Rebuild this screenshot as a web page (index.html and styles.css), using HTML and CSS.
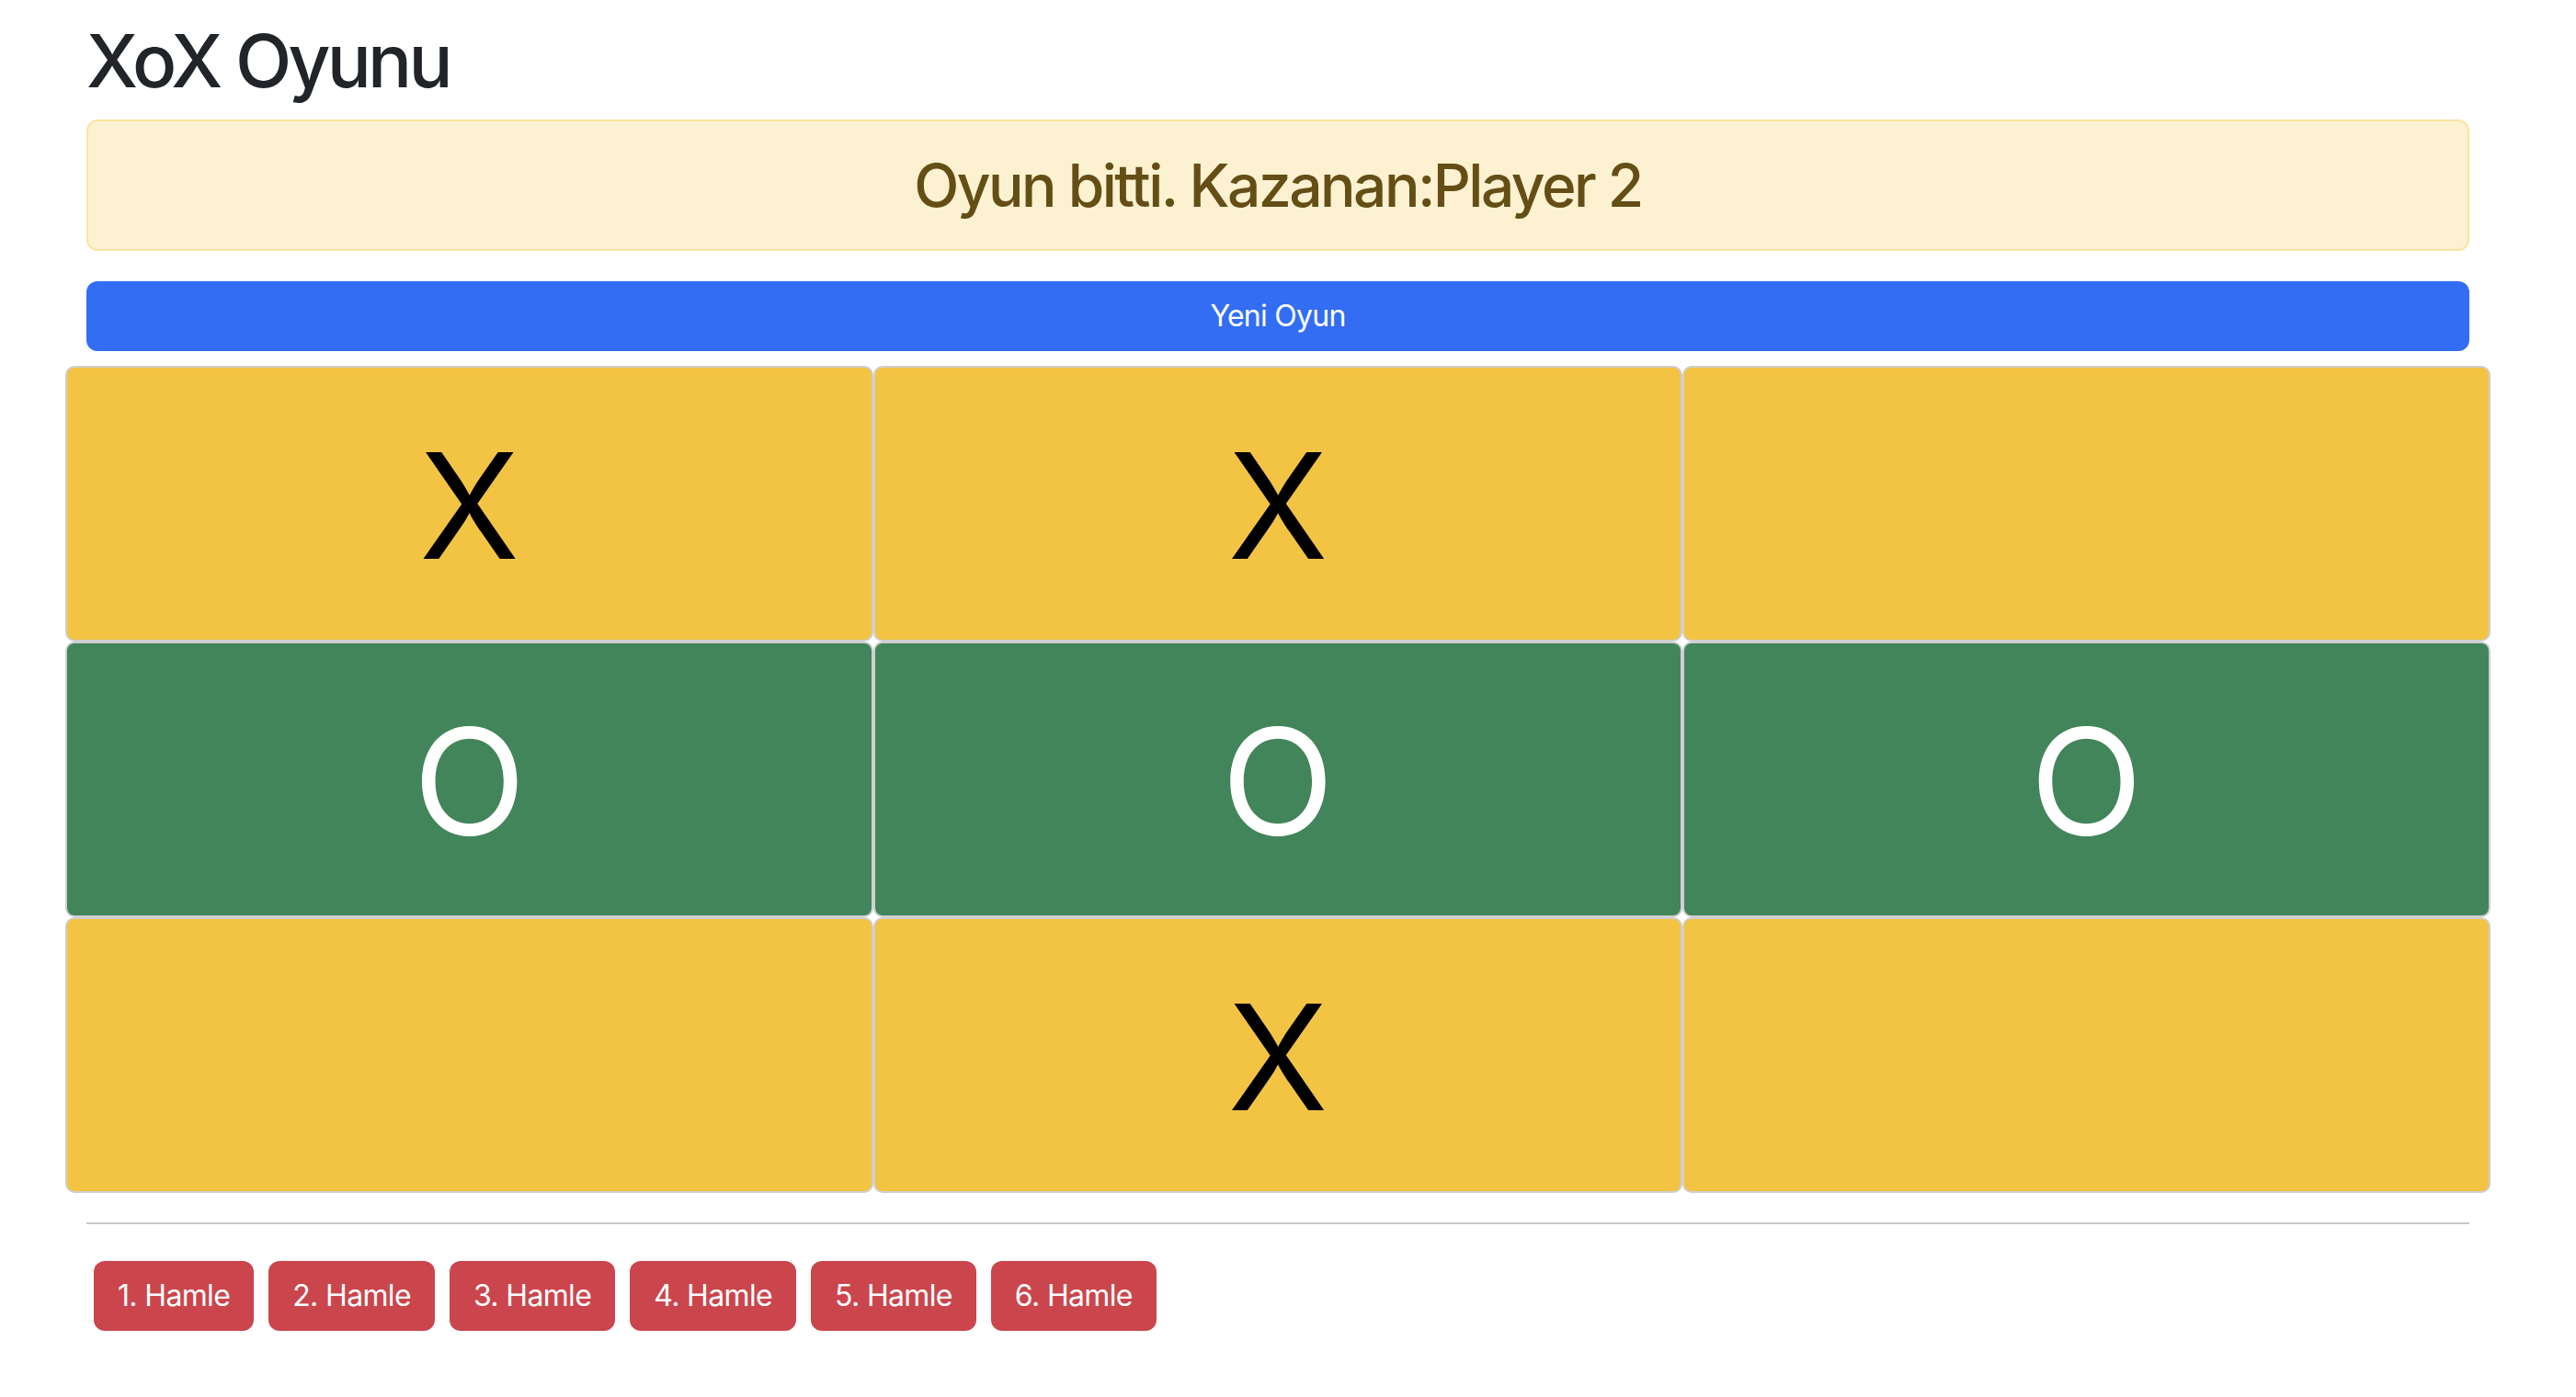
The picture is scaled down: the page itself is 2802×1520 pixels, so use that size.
FILE: index.html
```html
<!DOCTYPE html>
<html lang="tr">
<head>
<meta charset="utf-8">
<title>XoX Oyunu</title>
<link rel="stylesheet" href="styles.css">
</head>
<body>
<div class="page">
  <div class="container">
    <h1 class="title">XoX Oyunu</h1>
    <div class="alert"><h2 class="alert-text">Oyun bitti. Kazanan:Player 2</h2></div>
    <button class="btn btn-primary btn-block">Yeni Oyun</button>
    <div class="board">
      <button class="cell cell-x">X</button>
      <button class="cell cell-x">X</button>
      <button class="cell cell-x"></button>
      <button class="cell cell-o">O</button>
      <button class="cell cell-o">O</button>
      <button class="cell cell-o">O</button>
      <button class="cell cell-x"></button>
      <button class="cell cell-x">X</button>
      <button class="cell cell-x"></button>
    </div>
    <hr class="divider">
    <div class="moves">
      <button class="btn btn-danger">1. Hamle</button>
      <button class="btn btn-danger">2. Hamle</button>
      <button class="btn btn-danger">3. Hamle</button>
      <button class="btn btn-danger">4. Hamle</button>
      <button class="btn btn-danger">5. Hamle</button>
      <button class="btn btn-danger">6. Hamle</button>
    </div>
  </div>
</div>
</body>
</html>
```
FILE: styles.css
```css
* { box-sizing: border-box; }
html, body { margin: 0; padding: 0; background: #fff; }
body {
  font-family: Inter, "Noto Sans", "Liberation Sans", sans-serif;
  color: #212529;
}
.page { padding: 18px 0 40px 94px; }
.container { width: 2592px; }
.title {
  margin: 0 0 16px;
  font-size: 80px;
  line-height: 96px;
  font-weight: 500;
  letter-spacing: -3.8px;
  color: #212529;
}
.alert {
  height: 143px;
  margin-bottom: 33px;
  border: 2px solid #fbe4a2;
  border-radius: 12px;
  background: #fcf2d1;
  display: flex;
  align-items: center;
  justify-content: center;
}
.alert-text {
  margin: 0;
  font-size: 64px;
  line-height: 76px;
  font-weight: 500;
  letter-spacing: -2.5px;
  color: #654e16;
}
.btn {
  font-family: inherit;
  font-size: 32px;
  line-height: 48px;
  padding: 12px 24px;
  border: 2px solid transparent;
  border-radius: 12px;
  color: #fff;
  letter-spacing: -0.75px;
  cursor: pointer;
}
.btn-block { display: block; width: 100%; height: 76px; margin-bottom: 16px; }
.btn-primary { background: #336df3; }
.btn-danger { background: #cb454c; margin: 8px; letter-spacing: -0.65px; }
.board {
  margin: 0 -23px;
  display: grid;
  grid-template-columns: repeat(3, 1fr);
  grid-auto-rows: 300px;
}
.cell {
  font-family: inherit;
  font-size: 160px;
  font-weight: 400;
  line-height: 1;
  border: 2px solid #cfcfcf;
  border-radius: 10px;
  display: flex;
  align-items: center;
  justify-content: center;
  padding: 4px 0 0;
  margin: 0;
}
.cell-x { background: #f3c343; color: #000; }
.cell-o { background: #42855a; color: #fff; }
.divider {
  margin: 32px 0;
  border: 0;
  border-top: 2px solid #c8c8c8;
  height: 0;
}
.moves { display: flex; flex-wrap: wrap; }
```
